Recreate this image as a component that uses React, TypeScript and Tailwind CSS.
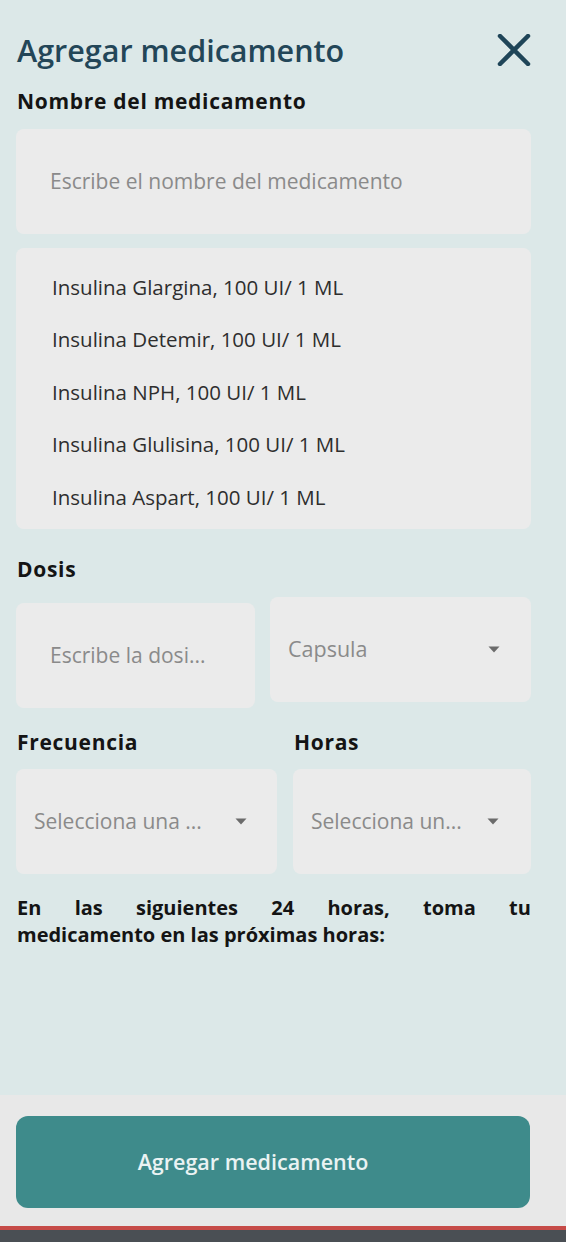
import React from "react";

const font = { fontFamily: "'Open Sans', Lato, 'Noto Sans', sans-serif" };

function Caret() {
  return (
    <svg width="12" height="7" viewBox="0 0 12 7" className="shrink-0">
      <path d="M0.5 0.5 L11.5 0.5 L6 6.5 Z" fill="#6b6b6b" />
    </svg>
  );
}

export default function App() {
  const meds = [
    "Insulina Glargina, 100 UI/ 1 ML",
    "Insulina Detemir, 100 UI/ 1 ML",
    "Insulina NPH, 100 UI/ 1 ML",
    "Insulina Glulisina, 100 UI/ 1 ML",
    "Insulina Aspart, 100 UI/ 1 ML",
  ];
  const line1 = ["En", "las", "siguientes", "24", "horas,", "toma", "tu"];
  return (
    <div style={font} className="w-full h-[1242px] flex flex-col bg-[#dce8e8] overflow-hidden">
      <div className="flex-1 px-[16px]">
        <div className="flex items-center justify-between pt-[30px]">
          <h1 className="text-[30.5px] leading-[40px] font-semibold text-[#234658] pl-[1px]">
            Agregar medicamento
          </h1>
          <svg width="34" height="32" viewBox="0 0 34 32" className="mr-[19px]">
            <path d="M3 2 L31 30 M31 2 L3 30" stroke="#1f4558" strokeWidth="4.5" strokeLinecap="round" />
          </svg>
        </div>
        <div className="mt-[19px] text-[21px] leading-[24px] font-bold text-[#141414] pl-[1px] tracking-[0.7px]">
          Nombre del medicamento
        </div>
        <div className="mt-[16px] h-[105px] w-[515px] rounded-[8px] bg-[#ebebeb] flex items-center pl-[34px] text-[21px] text-[#8a8a8a]">
          Escribe el nombre del medicamento
        </div>
        <div className="mt-[14px] h-[281px] w-[515px] rounded-[8px] bg-[#ebebeb] flex flex-col pt-[13px] pl-[36px]">
          {meds.map((m) => (
            <div key={m} className="h-[52.5px] flex items-center text-[20.5px] text-[#2e2e2e]">
              {m}
            </div>
          ))}
        </div>
        <div className="mt-[28px] text-[21px] leading-[24px] font-bold text-[#141414] pl-[1px] tracking-[0.7px]">Dosis</div>
        <div className="mt-[16px] flex gap-[15px] w-[515px]">
          <div className="mt-[6px] h-[105px] w-[239px] rounded-[8px] bg-[#ebebeb] flex items-center pl-[34px] text-[21px] text-[#8a8a8a]">
            Escribe la dosi...
          </div>
          <div className="h-[105px] w-[261px] rounded-[8px] bg-[#ebebeb] flex items-center justify-between pl-[18px] pr-[31px] text-[21.5px] text-[#8a8a8a]">
            <span>Capsula</span>
            <Caret />
          </div>
        </div>
        <div className="mt-[22px] flex gap-[16px] w-[515px]">
          <div className="w-[261px] flex flex-col">
            <div className="text-[21px] leading-[24px] font-bold text-[#141414] pl-[1px] tracking-[0.7px]">Frecuencia</div>
            <div className="mt-[15px] h-[105px] rounded-[8px] bg-[#ebebeb] flex items-center justify-between pl-[18px] pr-[30px] text-[21px] text-[#8a8a8a]">
              <span>Selecciona una ...</span>
              <Caret />
            </div>
          </div>
          <div className="w-[238px] flex flex-col">
            <div className="text-[21px] leading-[24px] font-bold text-[#141414] pl-[1px] tracking-[0.7px]">Horas</div>
            <div className="mt-[15px] h-[105px] rounded-[8px] bg-[#ebebeb] flex items-center justify-between pl-[18px] pr-[32px] text-[21px] text-[#8a8a8a]">
              <span>Selecciona un...</span>
              <Caret />
            </div>
          </div>
        </div>
        <div className="mt-[20px] w-[515px] text-[20px] leading-[27px] font-bold text-[#141414] pl-[1px]">
          <div className="flex justify-between">
            {line1.map((w) => (
              <span key={w}>{w}</span>
            ))}
          </div>
          <div>medicamento en las próximas horas:</div>
        </div>
      </div>
      <div className="h-[131px] bg-[#e8e8e8] px-[16px] pt-[21px]">
        <div className="h-[92px] w-[514px] rounded-[12px] bg-[#3e8b8b] flex items-center justify-center pr-[40px] text-[21.5px] font-semibold text-[#eaf3f3]">
          Agregar medicamento
        </div>
      </div>
      <div className="h-[4px] bg-[#c64b48]" />
      <div className="h-[12px] bg-[#4a4f54]" />
    </div>
  );
}
